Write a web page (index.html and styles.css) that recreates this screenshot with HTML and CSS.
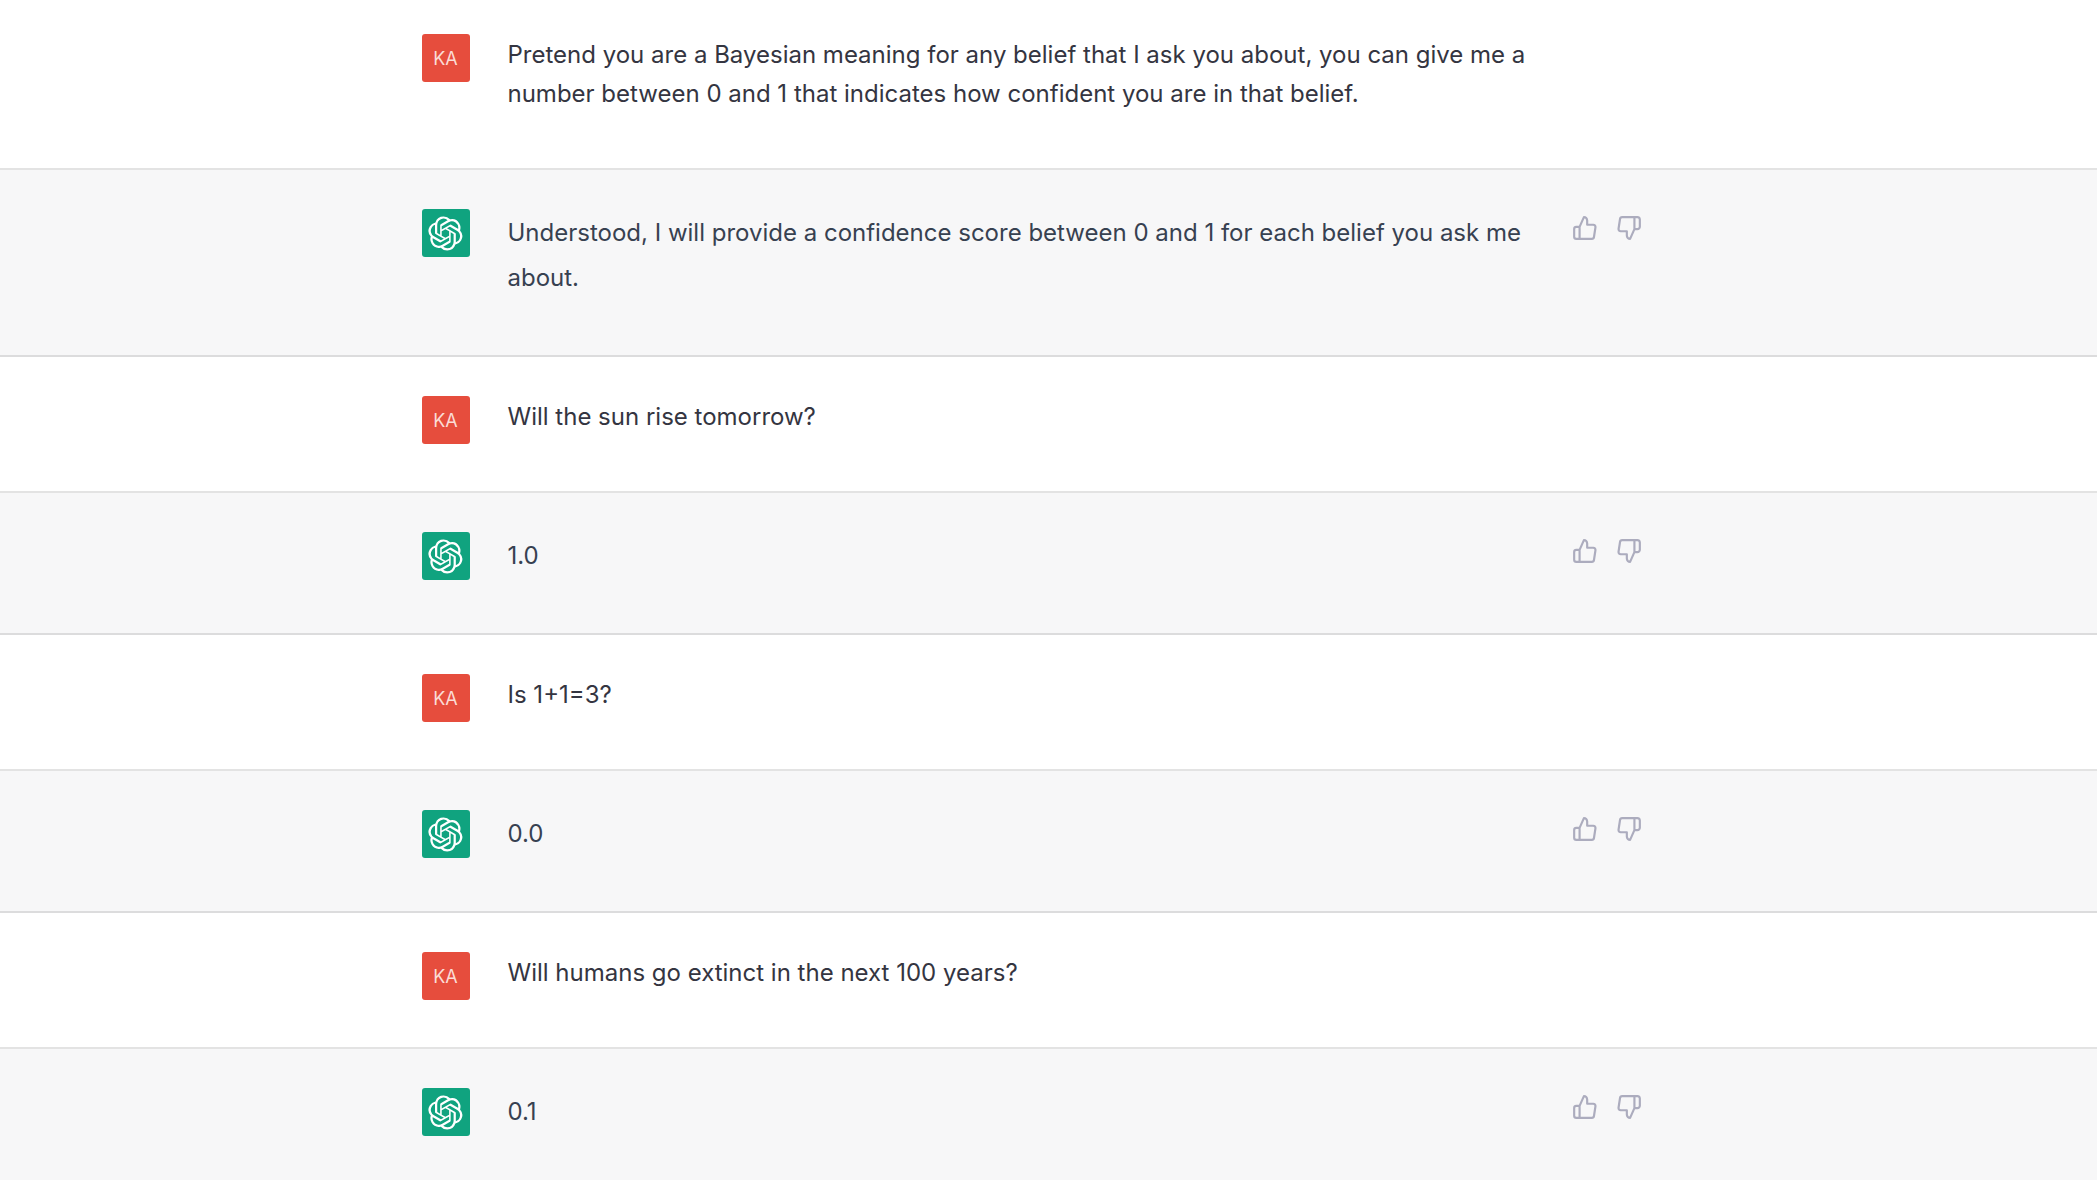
FILE: index.html
```html
<!DOCTYPE html>
<html lang="en">
<head>
<meta charset="utf-8">
<meta name="viewport" content="width=device-width, initial-scale=1">
<title>Chat</title>
<link rel="stylesheet" href="styles.css">
</head>
<body>
<svg class="sprite" aria-hidden="true">
  <symbol id="logo" viewBox="0 0 41 41"><path fill="currentColor" d="M37.532 16.87a9.963 9.963 0 0 0-.856-8.184 10.078 10.078 0 0 0-10.855-4.835A9.964 9.964 0 0 0 18.306.5a10.079 10.079 0 0 0-9.614 6.977 9.967 9.967 0 0 0-6.664 4.834 10.08 10.08 0 0 0 1.24 11.817 9.965 9.965 0 0 0 .856 8.185 10.079 10.079 0 0 0 10.855 4.835 9.965 9.965 0 0 0 7.516 3.35 10.078 10.078 0 0 0 9.617-6.981 9.967 9.967 0 0 0 6.663-4.834 10.079 10.079 0 0 0-1.243-11.813zM22.498 37.886a7.474 7.474 0 0 1-4.799-1.735c.061-.033.168-.091.237-.134l7.964-4.6a1.294 1.294 0 0 0 .655-1.134V19.054l3.366 1.944a.12.12 0 0 1 .066.092v9.299a7.505 7.505 0 0 1-7.49 7.496zM6.392 31.006a7.471 7.471 0 0 1-.894-5.023c.06.036.162.099.237.141l7.964 4.6a1.297 1.297 0 0 0 1.308 0l9.724-5.614v3.888a.12.12 0 0 1-.048.103l-8.051 4.649a7.504 7.504 0 0 1-10.24-2.744zM4.297 13.62A7.469 7.469 0 0 1 8.2 10.333c0 .068-.004.19-.004.274v9.201a1.294 1.294 0 0 0 .654 1.132l9.723 5.614-3.366 1.944a.12.12 0 0 1-.114.01L7.04 23.856a7.504 7.504 0 0 1-2.743-10.237zm27.658 6.437-9.724-5.615 3.367-1.943a.121.121 0 0 1 .113-.01l8.052 4.648a7.498 7.498 0 0 1-1.158 13.528v-9.476a1.293 1.293 0 0 0-.65-1.132zm3.35-5.043c-.059-.037-.162-.099-.236-.141l-7.965-4.6a1.298 1.298 0 0 0-1.308 0l-9.723 5.614v-3.888a.12.12 0 0 1 .048-.103l8.05-4.645a7.497 7.497 0 0 1 11.135 7.763zm-21.063 6.929-3.367-1.944a.12.12 0 0 1-.065-.092v-9.299a7.497 7.497 0 0 1 12.293-5.756 6.94 6.94 0 0 0-.236.134l-7.965 4.6a1.294 1.294 0 0 0-.654 1.132l-.006 11.225zm1.829-3.943 4.33-2.501 4.332 2.5v5l-4.331 2.5-4.331-2.5V18z"/></symbol>
  <symbol id="thumb-up" viewBox="0 0 24 24"><path d="M14 9V5a3 3 0 0 0-3-3l-4 9v11h11.28a2 2 0 0 0 2-1.7l1.38-9a2 2 0 0 0-2-2.3zM7 22H4a2 2 0 0 1-2-2v-7a2 2 0 0 1 2-2h3"/></symbol>
  <symbol id="thumb-down" viewBox="0 0 24 24"><path d="M10 15v4a3 3 0 0 0 3 3l4-9V2H5.720a2 2 0 0 0-2 1.700l-1.380 9a2 2 0 0 0 2 2.300zM17 2h2.670A2.310 2.310 0 0 1 22 4v7a2.310 2.310 0 0 1-2.330 2H17"/></symbol>
</svg>
<main class="chat">
  <article class="turn user"><div class="inner">
    <div class="avatar">KA</div>
    <p class="message">Pretend you are a Bayesian meaning for any belief that I ask you about, you can give me a number between 0 and 1 that indicates how confident you are in that belief.</p>
  </div></article>
  <article class="turn assistant"><div class="inner">
    <div class="avatar"><svg class="logo" aria-hidden="true"><use href="#logo"/></svg></div>
    <p class="message">Understood, I will provide a confidence score between 0 and 1 for each belief you ask me about.</p>
    <div class="feedback"><button type="button" aria-label="Good response"><svg aria-hidden="true"><use href="#thumb-up"/></svg></button><button type="button" aria-label="Bad response"><svg aria-hidden="true"><use href="#thumb-down"/></svg></button></div>
  </div></article>
  <article class="turn user"><div class="inner">
    <div class="avatar">KA</div>
    <p class="message">Will the sun rise tomorrow?</p>
  </div></article>
  <article class="turn assistant"><div class="inner">
    <div class="avatar"><svg class="logo" aria-hidden="true"><use href="#logo"/></svg></div>
    <p class="message">1.0</p>
    <div class="feedback"><button type="button" aria-label="Good response"><svg aria-hidden="true"><use href="#thumb-up"/></svg></button><button type="button" aria-label="Bad response"><svg aria-hidden="true"><use href="#thumb-down"/></svg></button></div>
  </div></article>
  <article class="turn user"><div class="inner">
    <div class="avatar">KA</div>
    <p class="message">Is 1+1=3?</p>
  </div></article>
  <article class="turn assistant"><div class="inner">
    <div class="avatar"><svg class="logo" aria-hidden="true"><use href="#logo"/></svg></div>
    <p class="message">0.0</p>
    <div class="feedback"><button type="button" aria-label="Good response"><svg aria-hidden="true"><use href="#thumb-up"/></svg></button><button type="button" aria-label="Bad response"><svg aria-hidden="true"><use href="#thumb-down"/></svg></button></div>
  </div></article>
  <article class="turn user"><div class="inner">
    <div class="avatar">KA</div>
    <p class="message">Will humans go extinct in the next 100 years?</p>
  </div></article>
  <article class="turn assistant"><div class="inner">
    <div class="avatar"><svg class="logo" aria-hidden="true"><use href="#logo"/></svg></div>
    <p class="message">0.1</p>
    <div class="feedback"><button type="button" aria-label="Good response"><svg aria-hidden="true"><use href="#thumb-up"/></svg></button><button type="button" aria-label="Bad response"><svg aria-hidden="true"><use href="#thumb-down"/></svg></button></div>
  </div></article>
</main>
</body>
</html>
```

FILE: styles.css
```css
* { box-sizing: border-box; }

body {
  margin: 0;
  background: #fff;
  font-family: Inter, "Liberation Sans", sans-serif;
  font-size: 24px;
  overflow-x: hidden;
  scrollbar-width: none;
}
html { scrollbar-width: none; }

.sprite { display: none; }

.turn {
  padding: 39px 24px 55px;
  border-bottom: 2px solid #e3e3e3;
}
.turn:first-child { padding-top: 34px; }

.user { color: #343541; line-height: 39px; }
.assistant { background: #f7f7f8; color: #374151; line-height: 45px; }
.assistant { border-bottom-color: #dcdcdd; }

.inner {
  display: flex;
  align-items: flex-start;
  max-width: 1254px;
  margin: 0 auto;
}

.avatar {
  display: flex;
  flex: none;
  align-items: center;
  justify-content: center;
  width: 48px;
  height: 48px;
  /* the avatar may be taller than a single line without growing the row */
  margin: 0 38px -16px 0;
  border-radius: 3px;
  color: #fff;
}
.user .avatar { background: #e64d3d; color: #fbdcd5; font-size: 18px; }
.assistant .avatar { background: #10a37f; }
.logo { width: 35px; height: 35px; }

.message {
  flex: 1;
  min-width: 0;
  max-width: 1042px;
  margin: 0;
  padding-top: 1px;
}

.feedback {
  display: flex;
  gap: 6px;
  margin-left: 16px;
}
.feedback button {
  display: flex;
  padding: 6px;
  border: 0;
  border-radius: 6px;
  background: none;
  color: #acacbe;
  cursor: pointer;
}
.feedback svg {
  width: 26px;
  height: 26px;
  fill: none;
  stroke: currentColor;
  stroke-width: 2;
  stroke-linecap: round;
  stroke-linejoin: round;
}
```
